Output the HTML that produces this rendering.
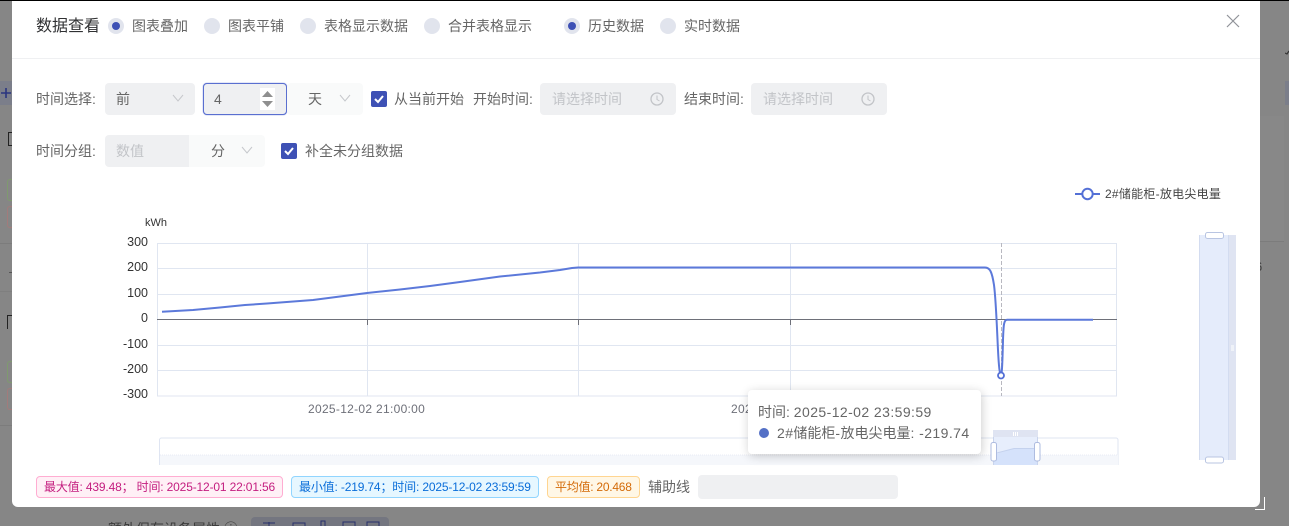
<!DOCTYPE html>
<html lang="zh"><head><meta charset="utf-8"><style>
*{box-sizing:border-box}
html,body{margin:0;padding:0;width:1289px;height:526px;overflow:hidden;background:#868686}
#wrap{position:relative;width:1289px;height:526px;overflow:hidden;background:#868686;font-family:"Liberation Sans","Noto Sans CJK SC",sans-serif;color:#666;font-size:14px}
.a{position:absolute;white-space:nowrap}
.t{line-height:20px;height:20px}
.modal{left:12px;top:1px;width:1248px;height:506px;background:#fff;border-radius:0 0 6px 6px}
.r{width:16px;height:16px;border-radius:50%;background:#e1e4ed}
.r.on::after{content:"";position:absolute;left:4px;top:4px;width:8px;height:8px;border-radius:50%;background:#3e51b5}
.inp{background:#eff0f2;border-radius:4px;height:32px}
.sel{background:#f9fafa;border-radius:4px;height:32px}
.ph{color:#c2c4c8}
.cb{width:16px;height:16px;background:#3e51b5;border-radius:2px}
.tag{height:22px;border-radius:4px;font-size:12px;line-height:20px;border:1px solid;padding-left:7px}
.ax{font-size:12.500px;color:#333;text-align:right;width:40px;line-height:16px;height:16px;left:108px}
.ls{letter-spacing:.42px}
</style></head><body><div id="wrap">
<div class="a" style="left:0;top:0;width:1289px;height:1px;background:#000;z-index:5"></div>
<!-- backdrop bits -->
<div class="a" style="left:0;top:81px;width:12px;height:24px;background:#7b7e8a"></div>
<svg class="a" style="left:0;top:86px" width="12" height="14"><path d="M1 7H11M6 2V12" stroke="#2a3580" stroke-width="1.600"/></svg>
<div class="a" style="left:8px;top:132px;width:4px;height:14px;border:1px solid #222;border-right:0"></div>
<div class="a" style="left:7px;top:179px;width:5px;height:22px;border:1px solid #7f9a6f;border-right:0;border-radius:3px 0 0 3px"></div>
<div class="a" style="left:7px;top:206px;width:5px;height:22px;border:1px solid #a27b7b;border-right:0;border-radius:3px 0 0 3px"></div>
<div class="a" style="left:0;top:243px;width:12px;height:1px;background:#7c7c7c"></div>
<div class="a" style="left:9px;top:272px;width:3px;height:1px;background:#555"></div>
<div class="a" style="left:0;top:291px;width:12px;height:1px;background:#7f7f7f"></div>
<div class="a" style="left:7px;top:315px;width:5px;height:14px;border-top:1px solid #222;border-left:1px solid #222"></div>
<div class="a" style="left:7px;top:361px;width:5px;height:22px;border:1px solid #7f9a6f;border-right:0;border-radius:3px 0 0 3px"></div>
<div class="a" style="left:7px;top:388px;width:5px;height:22px;border:1px solid #a27b7b;border-right:0;border-radius:3px 0 0 3px"></div>
<div class="a" style="left:0;top:425px;width:12px;height:1px;background:#7c7c7c"></div>
<div class="a" style="left:1260px;top:116px;width:24px;height:126px;background:#888"></div>
<div class="a" style="left:1260px;top:241px;width:24px;height:1px;background:#7c7c7c"></div>
<div class="a" style="left:1260px;top:259px;width:4px;height:16px;overflow:hidden"><span class="a" style="left:-5px;top:0;color:#3f3f3f;font-size:13px;line-height:16px">6</span></div>
<div class="a" style="left:1285px;top:81px;width:4px;height:24px;background:#7b7e8a"></div>
<svg class="a" style="left:1285px;top:48px" width="4" height="8"><path d="M0 5L2 6L4 3" stroke="#333" stroke-width="1.200" fill="none"/></svg>
<div class="a" style="left:1255px;top:497px;width:10px;height:13px;border-right:1px solid #fff;border-bottom:1px solid #fff"></div>
<div class="a" style="left:108px;top:519px;color:#3c3c3c;font-size:14px;line-height:20px">额外保存设备属性 ⓘ</div>
<div class="a" style="left:251px;top:517px;width:138px;height:9px;background:#747680;border-radius:4px 4px 0 0"></div>
<svg class="a" style="left:251px;top:517px" width="138" height="9"><path d="M12 6H24M18 5V9M42 9V6H54V9M70 9V4H74V9M92 9V5H104V9M116 9V5H128V9" stroke="#27306b" fill="none"/></svg>

<div class="a modal"></div>
<div class="a" style="left:12px;top:58px;width:1248px;height:1px;background:#eff0f2"></div>
<div class="a" style="left:36px;top:16px;font-size:16px;line-height:22px;color:#303133">数据查看</div>
<div class="a r on" style="left:108px;top:18px"></div><div class="a t" style="left:132px;top:16px">图表叠加</div>
<div class="a r" style="left:204px;top:18px"></div><div class="a t" style="left:228px;top:16px">图表平铺</div>
<div class="a r" style="left:300px;top:18px"></div><div class="a t" style="left:324px;top:16px">表格显示数据</div>
<div class="a r" style="left:424px;top:18px"></div><div class="a t" style="left:448px;top:16px">合并表格显示</div>
<div class="a r on" style="left:564px;top:18px"></div><div class="a t" style="left:588px;top:16px">历史数据</div>
<div class="a r" style="left:660px;top:18px"></div><div class="a t" style="left:684px;top:16px">实时数据</div>
<svg class="a" style="left:1226px;top:14px" width="14" height="14" viewBox="0 0 14 14"><path d="M1 1L13 13M13 1L1 13" stroke="#909399" stroke-width="1.200" fill="none"/></svg>

<div class="a t" style="left:36px;top:89px">时间选择:</div>
<div class="a inp" style="left:105px;top:83px;width:90px"></div>
<div class="a t" style="left:116px;top:89px">前</div>
<svg class="a" style="left:172px;top:94px" width="12" height="8"><path d="M1 1L6 7L11 1" stroke="#c6c8cc" fill="none"/></svg>
<div class="a inp" style="left:203px;top:83px;width:84px;border:1px solid #5a6fd0;box-shadow:0 0 1px #5a6fd0"></div>
<div class="a t" style="left:214px;top:89px">4</div>
<div class="a" style="left:260px;top:88px;width:15px;height:22px;background:#fff"></div>
<svg class="a" style="left:261px;top:89px" width="13" height="20"><path d="M6.500 2L12 8H1Z" fill="#8f8f8f"/><path d="M6.500 18L12 12H1Z" fill="#8f8f8f"/></svg>
<div class="a sel" style="left:287px;top:83px;width:76px"></div>
<div class="a t" style="left:308px;top:89px">天</div>
<svg class="a" style="left:339px;top:94px" width="12" height="8"><path d="M1 1L6 7L11 1" stroke="#c6c8cc" fill="none"/></svg>
<div class="a cb" style="left:371px;top:91px"></div>
<svg class="a" style="left:371px;top:91px" width="16" height="16"><path d="M4 8L7 11L12 5" stroke="#fff" stroke-width="2" fill="none"/></svg>
<div class="a t" style="left:394px;top:89px">从当前开始</div>
<div class="a t" style="left:473px;top:89px">开始时间:</div>
<div class="a inp" style="left:540px;top:83px;width:136px"></div>
<div class="a t ph" style="left:552px;top:89px">请选择时间</div>
<svg class="a" style="left:650px;top:92px" width="14" height="14"><circle cx="7" cy="7" r="6" stroke="#c2c4c8" stroke-width="1.300" fill="none"/><path d="M7 3.500V7.500L9.500 9" stroke="#c2c4c8" fill="none"/></svg>
<div class="a t" style="left:684px;top:89px">结束时间:</div>
<div class="a inp" style="left:751px;top:83px;width:136px"></div>
<div class="a t ph" style="left:763px;top:89px">请选择时间</div>
<svg class="a" style="left:861px;top:92px" width="14" height="14"><circle cx="7" cy="7" r="6" stroke="#c2c4c8" stroke-width="1.300" fill="none"/><path d="M7 3.500V7.500L9.500 9" stroke="#c2c4c8" fill="none"/></svg>

<div class="a t" style="left:36px;top:141px">时间分组:</div>
<div class="a inp" style="left:105px;top:135px;width:84px;border-radius:4px 0 0 4px"></div>
<div class="a t ph" style="left:116px;top:141px">数值</div>
<div class="a sel" style="left:189px;top:135px;width:76px;border-radius:0 4px 4px 0"></div>
<div class="a t" style="left:211px;top:141px">分</div>
<svg class="a" style="left:241px;top:146px" width="12" height="8"><path d="M1 1L6 7L11 1" stroke="#c6c8cc" fill="none"/></svg>
<div class="a cb" style="left:281px;top:143px"></div>
<svg class="a" style="left:281px;top:143px" width="16" height="16"><path d="M4 8L7 11L12 5" stroke="#fff" stroke-width="2" fill="none"/></svg>
<div class="a t" style="left:305px;top:141px">补全未分组数据</div>

<!-- legend -->
<svg class="a" style="left:1075px;top:187px" width="26" height="14"><path d="M0 7H25" stroke="#5470d6" stroke-width="2"/><circle cx="12.500" cy="7" r="5.200" fill="#fff" stroke="#5470d6" stroke-width="2"/></svg>
<div class="a" style="left:1105px;top:186px;font-size:12px;line-height:16px;color:#444;letter-spacing:.25px">2#储能柜-放电尖电量</div>

<div class="a" style="left:145px;top:216px;font-size:11px;line-height:14px;color:#333">kWh</div>
<div class="a ax" style="top:234px">300</div>
<div class="a ax" style="top:259px">200</div>
<div class="a ax" style="top:285px">100</div>
<div class="a ax" style="top:310px">0</div>
<div class="a ax" style="top:336px">-100</div>
<div class="a ax" style="top:361px">-200</div>
<div class="a ax" style="top:386px">-300</div>

<svg class="a" style="left:0;top:0" width="1289" height="526">
<g stroke="#e0e6f1" fill="none">
<path d="M157.500 243.500H1116.500V396H157.500Z"/>
<path d="M157 268.500H1117M157 294.500H1117M157 345.500H1117M157 370.500H1117"/>
<path d="M367.500 243V396M578.500 243V396M790.500 243V396"/>
</g>
<path d="M157 319.500H1117" stroke="#6e7079"/>
<path d="M367.500 320V325M578.500 320V325M790.500 320V325" stroke="#6e7079"/>
<path d="M1001.500 243V396" stroke="#b8b8c0" stroke-dasharray="4 2"/>
<path d="M162 311.700L193 310L220 307.500L245 305L267 303.500L313 300L340 296.500L367 293L400 289.500L430 286L460 282L500 276.500L540 272.500L560 270L572 268L578 267.500H985C990 267.500 992 272 994 285C996 300 997 330 998 350C999 370 1000 375 1001 375C1002 375 1002.500 360 1003 340C1003.500 324 1004 319.800 1007 319.700H1093" stroke="#5c79da" stroke-width="2" fill="none" stroke-linejoin="round"/>
<circle cx="1001" cy="375.500" r="3" fill="#fff" stroke="#5470d6" stroke-width="1.800"/>
<!-- bottom slider -->
<path d="M159.500 465V440a2 2 0 0 1 2-2H1116a2 2 0 0 1 2 2V465" stroke="#dfe5f2" fill="none"/>
<rect x="160" y="455" width="958" height="10" fill="#f5f7fb"/>
<path d="M160 455H1118" stroke="#e8ebf4" stroke-dasharray="1 1"/>
<rect x="993" y="430" width="45" height="7" fill="#dfe4f2"/>
<rect x="993" y="437" width="45" height="28" fill="#e7eefc"/>
<path d="M993 455L1014 448.500H1038V465H993Z" fill="#d5e2fb"/>
<path d="M993 454L1014 448.500H1038" stroke="#c4d2ee" fill="none"/>
<path d="M993.500 437V465M1037.500 437V465" stroke="#c9d4ec"/>
<path d="M1013.500 432v4M1015.500 432v4M1017.500 432v4" stroke="#fff"/>
<rect x="991" y="442.500" width="5.500" height="18.500" rx="2" fill="#fff" stroke="#aebce0"/>
<rect x="1034.500" y="442.500" width="5.500" height="18.500" rx="2" fill="#fff" stroke="#aebce0"/>
<!-- right slider -->
<rect x="1199" y="235" width="30" height="225" fill="#e5ecfb"/>
<rect x="1229" y="235" width="7" height="225" fill="#dfe4f2"/>
<path d="M1199.500 235V460M1228.500 235V460" stroke="#d3dcf0"/>
<rect x="1205.500" y="232.500" width="18" height="6" rx="2" fill="#fff" stroke="#b9c5e2"/>
<rect x="1205.500" y="457" width="18" height="6" rx="2" fill="#fff" stroke="#b9c5e2"/>
<path d="M1231 346h3M1231 348h3M1231 350h3" stroke="#fff"/>
</svg>

<div class="a" style="left:308px;top:401px;font-size:12px;line-height:16px;color:#6e7079;letter-spacing:.3px">2025-12-02 21:00:00</div>
<div class="a" style="left:731px;top:401px;font-size:12px;line-height:16px;color:#6e7079;letter-spacing:.3px">2025-12-02 22:30:00</div>

<div class="a" style="left:748px;top:390px;width:233px;height:64px;background:#fff;border-radius:4px;box-shadow:1px 2px 10px rgba(0,0,0,.2)"></div>
<div class="a t" style="left:758px;top:402px">时间: <span class="ls">2025-12-02 23:59:59</span></div>
<div class="a" style="left:759px;top:428px;width:10px;height:10px;border-radius:50%;background:#5470c6"></div>
<div class="a t" style="left:777px;top:423px"><span class="ls">2#</span>储能柜<span class="ls">-</span>放电尖电量<span class="ls">: -219.74</span></div>

<div class="a tag" style="left:36px;top:476px;width:247px;background:#fff0f6;border-color:#ffadd2;color:#c41d7f;letter-spacing:-.16px">最大值: 439.48； 时间: 2025-12-01 22:01:56</div>
<div class="a tag" style="left:291px;top:476px;width:248px;background:#e6f7ff;border-color:#91d5ff;color:#096dd9;letter-spacing:-.16px">最小值: -219.74；时间: 2025-12-02 23:59:59</div>
<div class="a tag" style="left:547px;top:476px;width:93px;background:#fff7e6;border-color:#ffd591;color:#d46b08;letter-spacing:-.25px">平均值: 20.468</div>
<div class="a t" style="left:648px;top:477px">辅助线</div>
<div class="a" style="left:698px;top:475px;width:200px;height:24px;background:#eff0f2;border-radius:4px"></div>
</div></body></html>
